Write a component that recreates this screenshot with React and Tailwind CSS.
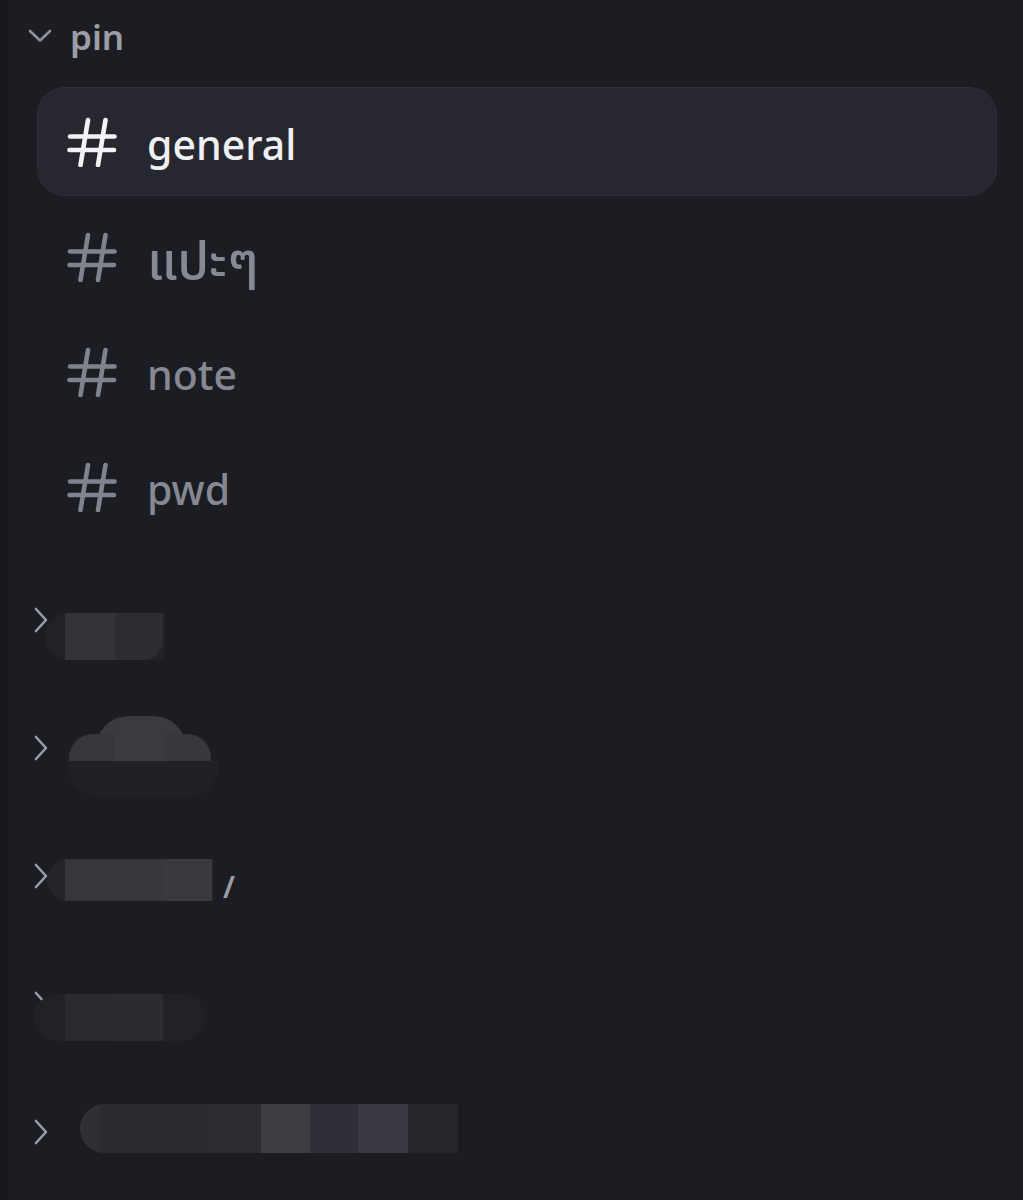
import { useState } from 'react';

const channels = [
  { id: 'general', name: 'general' },
  { id: 'pae', name: 'แปะๆ', thai: true },
  { id: 'note', name: 'note' },
  { id: 'pwd', name: 'pwd' },
];

const HashIcon = ({ className }) => (
  <svg className={className} width="50" height="50" viewBox="0 0 50 50" fill="none" stroke="currentColor" strokeWidth="4.6" strokeLinecap="round">
    <line x1="21" y1="3" x2="13.5" y2="48" />
    <line x1="38.5" y1="3" x2="31" y2="48" />
    <line x1="3" y1="19.5" x2="47.5" y2="19.5" />
    <line x1="2.5" y1="33" x2="47" y2="33" />
  </svg>
);

const ChevronDown = () => (
  <svg width="24" height="14" viewBox="0 0 24 14" fill="none" stroke="#8e9099" strokeWidth="2.6" strokeLinecap="round" strokeLinejoin="round">
    <path d="M2 2l10 9.5L22 2" />
  </svg>
);

const ChevronRight = ({ hidden }) => (
  <svg
    className={hidden ? '' : 'relative z-10'}
    width="14"
    height="26"
    viewBox="0 0 14 26"
    fill="none"
    stroke="#9a9ca5"
    strokeWidth="2.6"
    strokeLinecap="round"
    strokeLinejoin="round"
  >
    <path d="M2 2l10 11L2 24" />
  </svg>
);

// hidden category names, smudged over
const CollapsedCategory = ({ children, covered }) => (
  <div className="relative flex h-[128px] items-center pl-[26px]">
    <ChevronRight hidden={covered} />
    {children}
  </div>
);

const App = () => {
  const [active, setActive] = useState('general');

  return (
    <div
      className="flex min-h-[1200px] w-[1023px] overflow-hidden bg-[#1c1d22]"
      style={{ fontFamily: '"Noto Sans", "Noto Sans Thai", "DejaVu Sans", sans-serif' }}
    >
      <div className="w-[8px] shrink-0 bg-[#16171b]" />
      <div className="flex-1">
        <button className="flex h-[72px] items-center gap-[18px] pl-[20px]">
          <ChevronDown />
          <span className="text-[35px] font-semibold leading-none text-[#9c9da6]">pin</span>
        </button>

        <div className="mt-[15px] flex flex-col gap-[6px] pl-[29px] pr-[26px]">
          {channels.map((ch) => {
            const selected = active === ch.id;
            return (
              <div
                key={ch.id}
                onClick={() => setActive(ch.id)}
                className={`flex h-[109px] cursor-pointer items-center gap-[30px] rounded-[28px] border pl-[29px] ${
                  selected ? 'border-[#2f3038] bg-[#27282f]' : 'border-transparent'
                }`}
              >
                <HashIcon className={selected ? 'text-[#f2f3f5]' : 'text-[#80838e]'} />
                <span
                  className={`pt-[5px] font-medium leading-none ${ch.thai ? 'text-[52px]' : 'text-[41px]'} ${
                    selected ? 'text-[#eff0f2]' : 'text-[#868893]'
                  }`}
                >
                  {ch.name}
                </span>
              </div>
            );
          })}
        </div>

        <div className="mt-[15px] flex flex-col">
          <CollapsedCategory>
            <div className="absolute left-[37px] top-[57px] flex h-[47px] w-[120px] overflow-hidden rounded-l-full rounded-r-[22px] bg-[#212227]">
              <div className="ml-[20px] w-[50px] bg-[#333439]" />
              <div className="w-[48px] rounded-br-[20px] bg-[#2d2e33]" />
            </div>
          </CollapsedCategory>

          <CollapsedCategory>
            <div className="absolute left-[87px] top-[32px] h-[34px] w-[92px] rounded-t-full bg-[#3a3b40]" />
            <div className="absolute left-[61px] top-[50px] flex h-[27px] w-[142px] overflow-hidden rounded-t-[24px]">
              <div className="w-[46px] bg-[#36373c]" />
              <div className="w-[48px] bg-[#3b3c41]" />
              <div className="w-[48px] bg-[#37383c]" />
            </div>
            <div className="absolute left-[60px] top-[77px] h-[36px] w-[150px] rounded-b-[30px] bg-[#202126]" />
          </CollapsedCategory>

          <CollapsedCategory>
            <div className="absolute left-[39px] top-[47px] flex h-[42px] w-[166px] overflow-hidden rounded-l-full rounded-r-[20px] bg-[#24252a]">
              <div className="ml-[18px] w-[50px] bg-[#36373c]" />
              <div className="w-[48px] bg-[#37383d]" />
              <div className="w-[49px] bg-[#393a3f]" />
            </div>
            <span className="absolute left-[215px] top-[60px] text-[30px] font-semibold leading-none text-[#9c9da6]">/</span>
          </CollapsedCategory>

          <CollapsedCategory covered>
            <div className="absolute left-[26px] top-[54px] flex h-[47px] w-[171px] overflow-hidden rounded-full bg-[#212227]">
              <div className="ml-[31px] w-[49px] bg-[#2a2b30]" />
              <div className="w-[49px] bg-[#2b2c31]" />
            </div>
          </CollapsedCategory>

          <CollapsedCategory>
            <div className="absolute left-[72px] top-[36px] flex h-[49px] w-[378px] overflow-hidden rounded-l-full rounded-r-[16px] bg-[#25262b]">
              <div className="w-[20px] bg-[#2f3034]" />
              <div className="w-[112px] bg-[#2b2c31]" />
              <div className="w-[49px] bg-[#2c2d32]" />
              <div className="w-[49px] bg-[#3d3e42]" />
              <div className="w-[48px] bg-[#2f3037]" />
              <div className="w-[50px] bg-[#393a41]" />
            </div>
          </CollapsedCategory>
        </div>
      </div>
    </div>
  );
};

export default App;
